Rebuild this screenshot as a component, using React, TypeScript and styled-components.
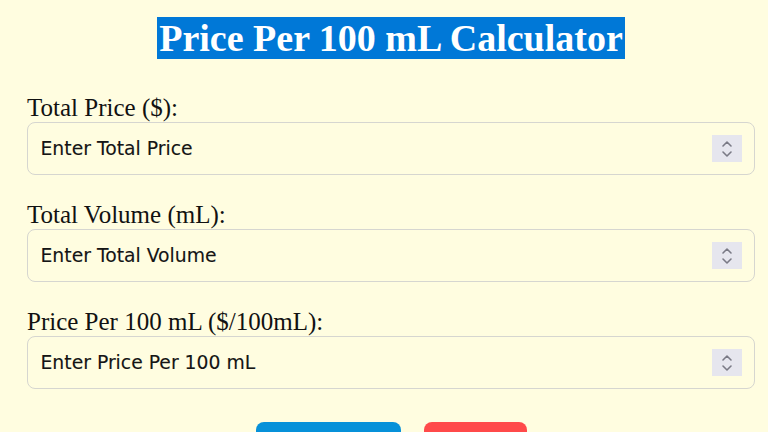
import React, { useState } from "react";
import styled, { createGlobalStyle } from "styled-components";

const GlobalStyle = createGlobalStyle`
  html, body {
    margin: 0;
    padding: 0;
    background: #fffde0;
    overflow: hidden;
  }
  body {
    font-family: "Liberation Serif", "Times New Roman", serif;
    color: #111;
  }
`;

const Page = styled.div`
  width: 728px;
  margin-left: 27px;
  padding-top: 17px;
  display: flex;
  flex-direction: column;
`;

const Title = styled.h1`
  margin: 0 0 34px;
  text-align: center;
  font-size: 38px;
  line-height: 42px;
  font-weight: bold;

  span {
    background: #0078d7;
    color: #fff;
    padding: 0 2px;
  }
`;

const Field = styled.div`
  display: flex;
  flex-direction: column;
  margin-bottom: 25px;
`;

const Label = styled.label`
  font-size: 25px;
  line-height: 29px;
  color: #111;
`;

const InputBox = styled.div`
  display: flex;
  align-items: center;
  height: 53px;
  box-sizing: border-box;
  border: 1.5px solid #d6d6d0;
  border-radius: 8px;
  padding: 0 12px 0 12.5px;
`;

const Input = styled.input`
  flex: 1;
  min-width: 0;
  padding: 0 0 1px;
  border: none;
  outline: none;
  background: transparent;
  font-family: "DejaVu Sans", Verdana, sans-serif;
  font-size: 18.8px;
  color: #111;
  -webkit-text-stroke: 0.12px #111;

  &::placeholder {
    color: #151515;
    opacity: 1;
  }
`;

const Spinner = styled.div`
  width: 30px;
  height: 27px;
  background: #e6e6ee;
  display: flex;
  align-items: center;
  justify-content: center;
`;

const Actions = styled.div`
  display: flex;
  justify-content: center;
  gap: 23px;
  margin-top: 8px;
`;

const Button = styled.button<{ $color: string; $width: number }>`
  width: ${(p) => p.$width}px;
  height: 56px;
  border: none;
  border-radius: 8px;
  background: ${(p) => p.$color};
  color: #fff;
  font-size: 18px;
  font-family: "DejaVu Sans", sans-serif;
`;

const SpinIcon = () => (
  <svg width="14" height="20" viewBox="0 0 14 20" fill="none" stroke="#7a7a85" strokeWidth="1.6" strokeLinecap="round" strokeLinejoin="round">
    <polyline points="3,7 7,3 11,7" />
    <polyline points="3,13 7,17 11,13" />
  </svg>
);

const fields = [
  { id: "price", label: "Total Price ($):", placeholder: "Enter Total Price" },
  { id: "volume", label: "Total Volume (mL):", placeholder: "Enter Total Volume" },
  { id: "per100", label: "Price Per 100 mL ($/100mL):", placeholder: "Enter Price Per 100 mL" },
];

const App = () => {
  const [values, setValues] = useState<Record<string, string>>({});

  return (
    <>
      <GlobalStyle />
      <Page>
        <Title>
          <span>Price Per 100 mL Calculator</span>
        </Title>
        {fields.map((f) => (
          <Field key={f.id}>
            <Label htmlFor={f.id}>{f.label}</Label>
            <InputBox>
              <Input
                id={f.id}
                type="text"
                inputMode="decimal"
                placeholder={f.placeholder}
                value={values[f.id] || ""}
                onChange={(e) => setValues({ ...values, [f.id]: e.target.value })}
              />
              <Spinner>
                <SpinIcon />
              </Spinner>
            </InputBox>
          </Field>
        ))}
        <Actions>
          <Button $color="#0791d9" $width={145}>Calculate</Button>
          <Button $color="#ff4a4a" $width={103}>Clear</Button>
        </Actions>
      </Page>
    </>
  );
};

export default App;
